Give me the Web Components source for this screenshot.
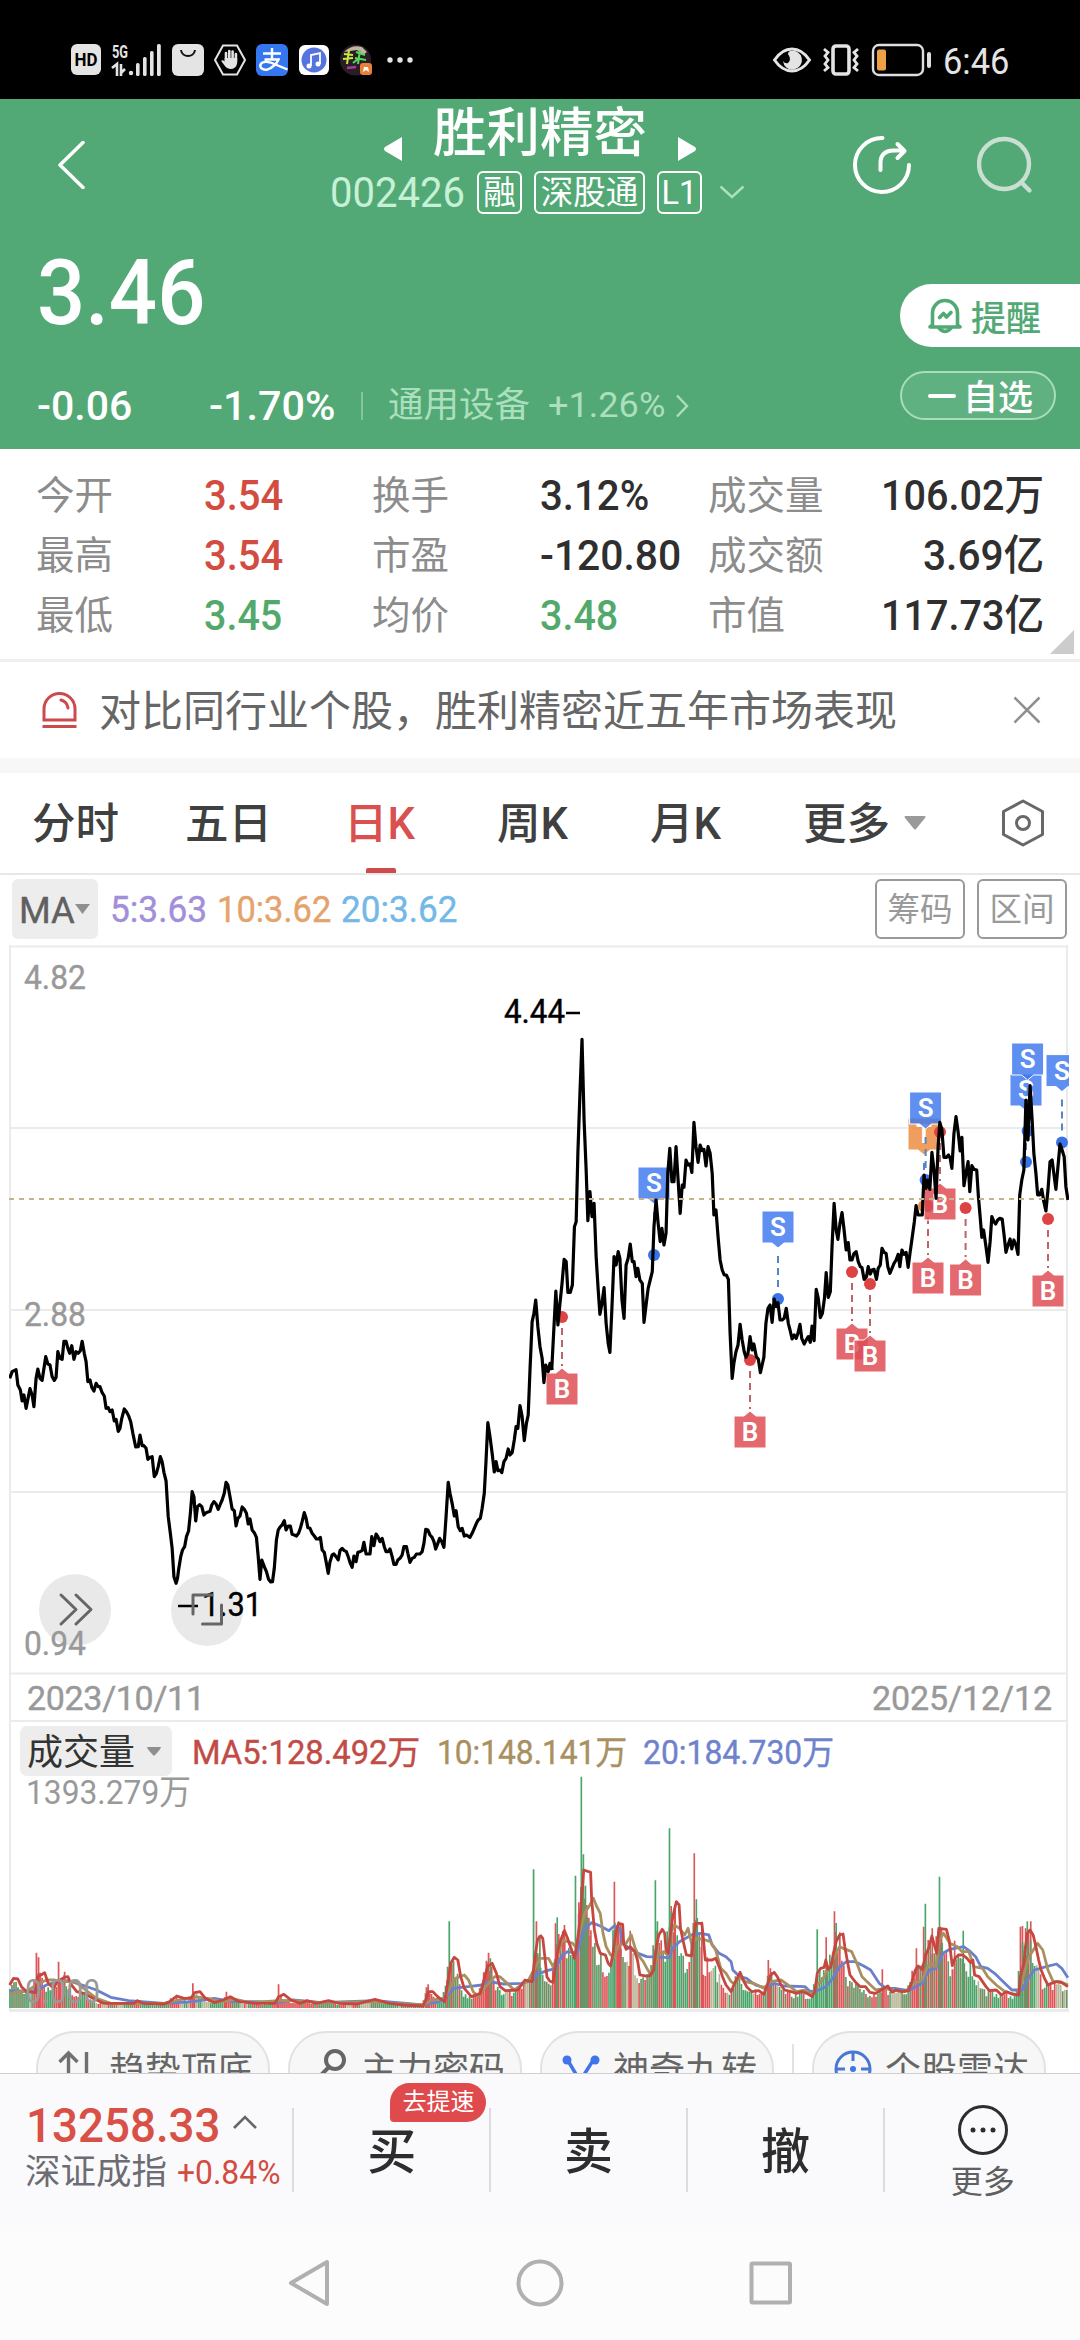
<!DOCTYPE html>
<html lang="zh-CN">
<head>
<meta charset="utf-8">
<title>胜利精密 002426</title>
<style>
body {
  margin: 0;
  width: 1080px;
  height: 2340px;
  overflow: hidden;
  background: #fff;
  color: #2f2f2f;
  font-family: Roboto, "Noto Sans CJK SC", sans-serif;
}
</style>
</head>
<body>
<status-bar></status-bar>
<stock-header></stock-header>
<quote-grid>
  <quote-item label="今开" tone="up" w="79">3.54</quote-item>
  <quote-item label="换手" w="109">3.12%</quote-item>
  <quote-item label="成交量" w="163" end>106.02万</quote-item>
  <quote-item label="最高" tone="up" w="79">3.54</quote-item>
  <quote-item label="市盈" w="141">-120.80</quote-item>
  <quote-item label="成交额" w="121" end>3.69亿</quote-item>
  <quote-item label="最低" tone="down" w="78">3.45</quote-item>
  <quote-item label="均价" tone="down" w="78">3.48</quote-item>
  <quote-item label="市值" w="163" end>117.73亿</quote-item>
</quote-grid>
<notice-bar>对比同行业个股，胜利精密近五年市场表现</notice-bar>
<period-tabs>
  <period-tab style="width: 153px">分时</period-tab>
  <period-tab style="width: 159px">五日</period-tab>
  <period-tab active style="width: 153px">日K</period-tab>
  <period-tab style="width: 153px">周K</period-tab>
  <period-tab style="width: 153px">月K</period-tab>
  <period-tab more style="width: 128px">更多</period-tab>
</period-tabs>
<ma-toolbar></ma-toolbar>
<price-chart></price-chart>
<volume-chart></volume-chart>
<tool-chips></tool-chips>
<trade-bar></trade-bar>
<nav-bar></nav-bar>

<script>
function define(name, html, setup) {
  const template = document.createElement("template");
  template.innerHTML = html;
  customElements.define(
    name,
    class extends HTMLElement {
      constructor() {
        super();
        this.attachShadow({ mode: "open" }).appendChild(
          template.content.cloneNode(true)
        );
        if (setup) setup(this, this.shadowRoot);
      }
    }
  );
}

// text squeezed or stretched to an exact width
class FitText extends HTMLElement {
  constructor() {
    super();
    this.attachShadow({ mode: "open" }).innerHTML = `
      <style>
      :host { display: inline-block; line-height: 1; white-space: nowrap; flex: none; }
      span { display: inline-block; transform-origin: 0 50%; }
      </style><span><slot></slot></span>`;
  }
  connectedCallback() {
    const span = this.shadowRoot.querySelector("span");
    const w = Number(this.getAttribute("w"));
    const real = span.offsetWidth;
    if (!w || !real) return;
    this.style.width = w + "px";
    span.style.transform = `scaleX(${w / real})`;
  }
}
customElements.define("fit-text", FitText);

define("status-bar", `
<style>
:host {
  display: flex;
  align-items: center;
  box-sizing: border-box;
  height: 99px;
  padding: 20px 71px 0;
  background: #000;
  color: #e4e4e4;
}
svg { flex: none; display: block; overflow: visible; }
.space { flex: 1; }
fit-text { font-size: 37px; font-weight: 400; padding-top: 3px; }
</style>
<svg width="30" height="31" viewBox="0 0 30 31"><rect width="30" height="31" rx="6" fill="#e4e4e4"/><text x="3.5" y="22" font-size="18" font-weight="700" textLength="23" lengthAdjust="spacingAndGlyphs" fill="#000">HD</text></svg>
<svg style="margin-left: 11px" width="50" height="32" viewBox="0 0 50 32" fill="#e4e4e4">
  <text x="0" y="14" font-size="18" font-weight="700" textLength="16" lengthAdjust="spacingAndGlyphs">5G</text>
  <path d="M0 24l5-4v12M9 20v12M13 25l-4 4" fill="none" stroke="#e4e4e4" stroke-width="2.6"/>
  <circle cx="19" cy="29" r="2.2"/><rect x="24" y="19" width="3.6" height="13" rx="1.6"/><rect x="31" y="13" width="3.6" height="19" rx="1.6"/><rect x="38" y="7" width="3.6" height="25" rx="1.6"/><rect x="45" y="0" width="3.8" height="32" rx="1.6"/>
</svg>
<svg style="margin-left: 10px" width="32" height="32" viewBox="0 0 32 32"><rect width="32" height="32" rx="6" fill="#e4e4e4"/><path d="M9 6c1 8 13 8 14 0" fill="none" stroke="#111" stroke-width="2"/></svg>
<svg style="margin-left: 10px" width="32" height="32" viewBox="0 0 32 32"><path d="M9 1.500h14l8 14.500-8 14.500H9L1 16z" fill="none" stroke="#e4e4e4" stroke-width="2"/><path d="M12 17V9M15.300 15V7M18.600 15V7.500M21.900 17v-7" stroke="#e4e4e4" stroke-width="2.600" stroke-linecap="round"/><path d="M10.700 14h12.500v5q-1 6-7 6-4-.5-6-4l-3-4q1-1.500 3.500.5z" fill="#e4e4e4"/></svg>
<svg style="margin-left: 10px" width="32" height="32" viewBox="0 0 32 32"><rect width="32" height="32" rx="6" fill="#3577ef"/><path d="M7 9.500h18M16 4v11M8.500 15.500h14c-2 5-6 8-11 10-5 1-8-2-7-5 2-4 9-3 15 0l12 5" fill="none" stroke="#fff" stroke-width="2.400"/></svg>
<svg style="margin-left: 11px" width="30" height="30" viewBox="0 0 30 30"><rect width="30" height="30" rx="6" fill="#fff"/><circle cx="15" cy="15" r="12.500" fill="#5574de"/><path d="M12 21V10l9-2v11" fill="none" stroke="#fff" stroke-width="1.800"/><circle cx="10" cy="21" r="2.500" fill="#fff"/><circle cx="19" cy="19" r="2.500" fill="#fff"/></svg>
<svg style="margin-left: 11px" width="32" height="32" viewBox="0 0 32 32"><circle cx="15.500" cy="16" r="15.500" fill="#2a1d26"/><path d="M4 8q8-8 18-5l5 5-4 3-6-5z" fill="#c4b3a0"/><path d="M4 10l9 1M9 6L7 20M3 15l10-1" stroke="#c8e83a" stroke-width="2"/><path d="M16 8l9 3M20 6l-2 14M15 14l11 2M13 19l5-4" stroke="#54d65a" stroke-width="2"/><path d="M7 24l9-1" stroke="#a23ca0" stroke-width="2.500"/><rect x="20" y="19" width="12" height="12" rx="3" fill="#e9803a"/><path d="M23 28l1-5h4l1 5-3-2z" fill="#fff"/></svg>
<svg style="margin-left: 15px" width="26" height="6" viewBox="0 0 26 6" fill="#e4e4e4"><circle cx="3" cy="3" r="2.700"/><circle cx="13" cy="3" r="2.700"/><circle cx="23" cy="3" r="2.700"/></svg>
<div class="space"></div>
<svg width="38" height="28" viewBox="0 0 38 28"><path d="M1.500 14Q9 3 19 3t17.500 11Q29 25 19 25T1.500 14z" fill="none" stroke="#e4e4e4" stroke-width="3"/><path d="M17 5a9.500 9.500 0 1 1-7 10q2 3 5 2 4-3 0-9 0-2 2-3z" fill="#e4e4e4"/></svg>
<svg style="margin-left: 11px" width="38" height="32" viewBox="0 0 38 32" fill="none" stroke="#e4e4e4"><rect x="11" y="2" width="16" height="28" rx="3" stroke-width="3.600"/><path d="M2 5l4 3.500-3 3.500 3 4-3 4 3 3.500L2 27M36 5l-4 3.500 3 3.500-3 4 3 4-3 3.500L36 27" stroke-width="2.800"/></svg>
<svg style="margin-left: 12px" width="60" height="32" viewBox="0 0 60 32"><rect x="1" y="1" width="50" height="30" rx="6" fill="none" stroke="#dedede" stroke-width="2.400"/><rect x="5" y="5.500" width="9" height="21" rx="2" fill="#eea045"/><rect x="55" y="8" width="4" height="16" rx="2" fill="#dedede"/></svg>
<fit-text style="margin-left: 11px" w="66">6:46</fit-text>
`);

define("stock-header", `
<style>
:host {
  display: block;
  height: 350px;
  background: #53a975;
  color: #fff;
}
svg { display: block; flex: none; }
.top { display: flex; height: 120px; }
.back { margin: 42px 246px 0 57px; }
.center { width: 415px; }
.title { display: flex; height: 66px; align-items: center; padding-left: 53px; font-size: 53px; line-height: 66px; }
.title svg { margin-top: 33px; }
.title fit-text { margin: 0 31px; padding-top: 5px; font-weight: 500; }
.code { display: flex; height: 54px; align-items: center; }
.code fit-text { color: #c6f1d6; font-size: 43px; margin-left: -1px; }
.tag {
  box-sizing: border-box;
  height: 43px;
  margin-left: 12px;
  border: 2px solid #fff;
  border-radius: 6px;
  text-align: center;
  font-size: 32.500px;
  line-height: 40px;
}
.share { margin: 36px 64px 0 107px; }
.search { margin-top: 36px; }
.body { display: flex; justify-content: space-between; }
.price { height: 146px; display: flex; align-items: center; box-sizing: border-box; padding: 3px 0 0 37px; font-size: 91px; font-weight: 500; }
.change { height: 82px; display: flex; align-items: center; padding-left: 37px; font-size: 41px; font-weight: 500; }
.change i { width: 2px; height: 28px; margin: 0 25px 0 26px; background: #86c49e; }
.muted { color: #abdfbd; font-size: 35.500px; font-weight: 400; line-height: 1; }
.side { width: 180px; padding-top: 65px; }
.remind {
  display: flex;
  align-items: center;
  box-sizing: border-box;
  height: 63px;
  padding-left: 28px;
  border-radius: 32px 0 0 32px;
  background: #fff;
  color: #53a975;
  font-size: 35px;
  font-weight: 500;
}
.remind svg { margin-right: 9px; }
.pick {
  display: flex;
  align-items: center;
  box-sizing: border-box;
  width: 156px;
  height: 49px;
  margin-top: 24px;
  padding-left: 26px;
  border: 2px solid #a9dcbb;
  border-radius: 25px;
  background: #60b181;
  font-size: 35px;
  font-weight: 500;
}
.pick i { width: 28px; height: 4px; border-radius: 2px; margin-right: 7px; background: #fff; }
.pick span { margin-top: -2px; }
</style>
<div class="top">
  <svg class="back" width="28" height="48" viewBox="0 0 28 48"><path d="M26 1.500L3 24l23 22.500" fill="none" stroke="#fff" stroke-width="3.500" stroke-linecap="round" stroke-linejoin="round"/></svg>
  <div class="center">
    <div class="title">
      <svg width="18" height="26" viewBox="0 0 18 26"><path d="M18 1v24L1 15q-2-2 0-4z" fill="#fff"/></svg>
      <fit-text w="214">胜利精密</fit-text>
      <svg width="18" height="26" viewBox="0 0 18 26"><path d="M0 1v24l17-10q2-2 0-4z" fill="#fff"/></svg>
    </div>
    <div class="code">
      <fit-text w="135">002426</fit-text>
      <span class="tag" style="width: 45px">融</span>
      <span class="tag" style="width: 111px">深股通</span>
      <span class="tag" style="width: 45px">L1</span>
      <svg style="margin-left: 17px" width="26" height="14" viewBox="0 0 26 14"><path d="M1.500 1.500L13 12 24.500 1.500" fill="none" stroke="#abdfbd" stroke-width="2.500"/></svg>
    </div>
  </div>
  <svg class="share" width="60" height="60" viewBox="0 0 60 60" fill="none" stroke="#fff" stroke-width="4" stroke-linecap="round" stroke-linejoin="round"><path d="M29.500 3a27 27 0 1 0 26.500 27"/><path d="M27.500 35v-7q0-12 13-12.500h9.500M44.500 9l7 7-7 7"/></svg>
  <svg class="search" width="60" height="60" viewBox="0 0 60 60" fill="none" stroke="#c9dfd1" stroke-width="4.400" stroke-linecap="round"><circle cx="27" cy="29" r="25"/><path d="M45 48l7.500 7.500"/></svg>
</div>
<div class="body">
  <div>
    <div class="price"><fit-text w="168">3.46</fit-text></div>
    <div class="change">
      <fit-text w="95">-0.06</fit-text>
      <fit-text style="margin-left: 77px" w="126">-1.70%</fit-text>
      <i></i>
      <span class="muted">通用设备</span>
      <fit-text style="margin-left: 18px" class="muted" w="117">+1.26%</fit-text>
      <svg style="margin-left: 10px" width="14" height="24" viewBox="0 0 14 24"><path d="M2 1.500L12 12 2 22.500" fill="none" stroke="#abdfbd" stroke-width="2.400"/></svg>
    </div>
  </div>
  <div class="side">
    <div class="remind">
      <svg width="34" height="36" viewBox="0 0 34 36" fill="none" stroke="#53a975" stroke-width="3.600" stroke-linejoin="round" stroke-linecap="round"><path d="M4.500 27V15a12.500 12.500 0 0 1 25 0v12l2.500 2H2z"/><path d="M11 30q6 7 12 0" /><path d="M11.500 19.500l4-4 3 3.500 4.500-4.500"/></svg>
      <span>提醒</span>
    </div>
    <div class="pick"><i></i><span>自选</span></div>
  </div>
</div>
`);

define("quote-item", `
<style>
:host { display: flex; align-items: center; height: 60px; font-size: 42px; }
:host([tone="up"]) { color: #d34c42; }
:host([tone="down"]) { color: #53a96c; }
.label { width: 168px; color: #8c8c8c; font-size: 38.500px; line-height: 1; }
:host([end]) { justify-content: space-between; }
:host([end]) .label { width: auto; }
fit-text { font-weight: 500; }
</style>
<span class="label"></span>
`, (el, root) => {
  root.querySelector(".label").textContent = el.getAttribute("label");
  const value = document.createElement("fit-text");
  value.setAttribute("w", el.getAttribute("w"));
  value.textContent = el.textContent;
  root.appendChild(value);
});

define("quote-grid", `
<style>
:host {
  display: grid;
  grid-template-columns: 336px 336px 1fr;
  align-content: start;
  box-sizing: border-box;
  height: 213px;
  padding: 17px 36px 0;
  border-bottom: 3px solid #efefef;
  position: relative;
}
svg { position: absolute; right: 6px; bottom: 5px; }
</style>
<slot></slot>
<svg width="24" height="24" viewBox="0 0 24 24"><path d="M24 0v24H0z" fill="#ccc"/></svg>
`);

define("notice-bar", `
<style>
:host {
  display: flex;
  align-items: center;
  box-sizing: border-box;
  height: 111px;
  padding: 0 39px 0 41px;
  border-bottom: 15px solid #f7f7f7;
  color: #666;
  font-size: 42px;
  line-height: 1;
}
.text { flex: 1; margin-left: 21px; padding-top: 4px; }
</style>
<svg width="37" height="38" viewBox="0 0 37 38" fill="none" stroke="#cb4b4c" stroke-width="3"><path d="M3 29V18a15.500 15.500 0 0 1 31 0v11zM1.500 35.500h34"/><path d="M20 9q6 1.500 7 8" stroke-linecap="round"/></svg>
<span class="text"><slot></slot></span>
<svg width="28" height="28" viewBox="0 0 28 28"><path d="M1.500 1.500l25 25M26.500 1.500l-25 25" stroke="#8f8f8f" stroke-width="2.500"/></svg>
`);

define("period-tab", `
<style>
:host {
  display: flex;
  flex-direction: column;
  height: 100px;
  color: #404040;
  font-size: 43.500px;
  font-weight: 500;
}
.row { display: flex; box-sizing: border-box; height: 95px; align-items: center; padding-top: 9px; line-height: 1; }
:host([active]) { color: #d9504f; }
i { display: none; width: 30px; height: 5px; margin-left: 22px; background: #cf4b4b; border-radius: 2px 2px 0 0; }
:host([active]) i { display: block; }
svg { display: none; margin: -4px 0 0 14px; }
:host([more]) svg { display: block; }
</style>
<div class="row"><slot></slot><svg width="22" height="14" viewBox="0 0 22 14"><path d="M1 0h20q1 1 0 2l-9 11q-1 1-2 0L1 2q-1-1 0-2z" fill="#9a9a9a"/></svg></div>
<i></i>
`);

define("period-tabs", `
<style>
:host {
  display: flex;
  box-sizing: border-box;
  height: 102px;
  padding-left: 32px;
  border-bottom: 2px solid #e8e8e8;
}
svg { flex: none; margin: 26px 0 0 70px; }
</style>
<slot></slot>
<svg width="44" height="48" viewBox="0 0 44 48" fill="none" stroke="#686868" stroke-width="3" stroke-linejoin="round"><path d="M22 2l19.500 10.500v23L22 46 2.500 35.500v-23z"/><circle cx="22" cy="24" r="6.500"/></svg>
`);

define("ma-toolbar", `
<style>
:host {
  display: flex;
  align-items: center;
  box-sizing: border-box;
  height: 70px;
  padding: 0 13px 2px 12px;
  font-size: 36px;
}
.ma {
  display: flex;
  align-items: center;
  box-sizing: border-box;
  width: 86px;
  height: 60px;
  padding-left: 7px;
  border-radius: 6px;
  background: #ededed;
  color: #606060;
  font-size: 37px;
}
fit-text { margin-left: 12px; padding-top: 2px; -webkit-text-stroke: .4px; }
.ma fit-text { margin-left: 0; }
.space { flex: 1; }
.btn {
  box-sizing: border-box;
  width: 90px;
  height: 60px;
  margin-left: 12px;
  border: 2px solid #999;
  border-radius: 6px;
  color: #999;
  font-size: 32.500px;
  line-height: 58px;
  text-align: center;
}
</style>
<div class="ma"><fit-text w="56">MA</fit-text><svg width="15" height="10" viewBox="0 0 15 10"><path d="M0 0h15L7.500 10z" fill="#8f8f8f"/></svg></div>
<fit-text w="97" style="color: #a18fd9">5:3.63</fit-text>
<fit-text w="114" style="color: #e4a36d; margin-left: 10px">10:3.62</fit-text>
<fit-text w="116" style="color: #74b8e8; margin-left: 10px">20:3.62</fit-text>
<div class="space"></div>
<span class="btn">筹码</span>
<span class="btn">区间</span>
`);

const PRICE_LEFT = "27,235 34,215 45,209 50,255 57,270 62,303 67,285 73,325 84,266 90,285 95,320 101,235 106,207 112,235 118,241 128,170 134,192 140,195 146,230 152,241 157,232 162,155 168,175 174,178 179,124 185,124 190,145 195,160 201,137 207,178 213,155 219,160 225,152 230,124 236,160 241,185 246,245 252,240 257,262 263,273 269,250 275,260 280,260 286,278 292,288 297,325 303,323 308,335 314,330 320,363 325,358 331,394 336,385 341,355 348,327 354,335 360,347 366,365 372,400 380,441 387,440 392,405 398,437 403,437 409,445 414,478 420,472 426,470 432,530 438,520 443,500 449,470 454,485 459,517 465,543 471,650 477,700 482,745 487,830 493,850 497,835 500,810 506,770 511,750 517,740 522,710 528,693 533,640 538,575 543,590 548,663 553,620 559,614 565,620 571,645 577,638 588,634 593,615 599,605 605,612 611,628 616,615 622,600 628,580 633,547 638,555 644,590 650,627 656,632 661,678 666,655 672,648 678,621 684,628 690,640 695,672 700,657 706,690 712,698 718,712 723,770 728,838 733,780 740,800 746,815 752,838 758,846 763,845 768,805 774,720 779,690 785,680 790,675 796,662 801,690 807,678 813,678 818,703 824,705 830,708 836,700 841,685 846,665 852,638 857,655 862,683 868,685 874,700 880,708 886,717 892,717 897,712 902,750 908,757 914,790 919,820 924,785 930,765 935,762 941,770 947,780 952,752 958,745 964,752 970,755 975,770 980,788 986,802 991,768 997,785 1002,757 1008,755 1014,752 1019,727 1025,762 1036,762 1041,710 1047,737 1053,702 1058,710 1064,725 1070,715 1076,740 1081,755 1087,755 1092,747 1098,770 1103,793 1109,793 1114,780 1120,775 1126,765 1131,740 1138,740 1142,760 1148,787 1154,775 1160,772 1166,762 1176,762 1182,755 1187,730 1192,688 1198,690 1204,705 1210,712 1215,725 1220,747 1226,730 1231,715 1237,725 1243,742 1249,650 1255,547 1260,580 1266,610 1272,648 1277,632 1283,680 1289,692 1294,685 1300,708 1306,705 1316,712 1322,700 1328,685 1334,670 1339,660 1345,655 1350,625 1356,580 1361,480 1366,368 1372,410 1378,460 1384,516 1389,485 1394,512 1400,510 1405,518 1411,485 1417,475 1423,447 1428,465 1434,458 1440,420 1445,380 1450,385 1456,317 1462,350 1468,422 1474,370 1479,345 1484,210 1490,65 1495,40 1500,0 1506,80 1512,140 1518,175 1523,248 1528,195 1535,215 1540,190 1546,210";
const PRICE_RIGHT = "34,1290 46,1053 52,1155 58,1090 64,1030 70,958 76,965 81,1057 88,1057 94,1035 100,860 105,845 110,640 116,460 122,298 128,540 134,690 139,842 145,755 151,830 157,790 163,950 169,1050 174,1123 180,1090 186,1043 192,1150 198,1210 203,1237 209,1100 215,950 221,975 227,935 232,955 238,1080 244,1135 250,975 256,955 262,912 268,965 273,965 279,1010 284,985 290,1020 297,1030 302,1147 308,1095 314,1045 320,1020 326,995 331,860 337,780 343,850 349,905 354,865 360,915 366,880 371,700 377,625 383,725 389,725 395,620 401,720 407,820 413,735 418,742 424,660 430,675 436,672 441,697 447,547 453,620 459,667 465,615 471,632 476,628 482,678 488,620 494,640 500,700 505,825 511,810 517,890 523,960 529,990 535,1005 541,1005 547,1018 552,1180 558,1315 563,1270 569,1235 575,1215 581,1153 587,1200 593,1235 598,1252 604,1240 610,1190 616,1230 621,1212 628,1250 634,1258 640,1298 645,1275 650,1252 656,1150 662,1105 668,1095 674,1147 680,1077 686,1100 691,1088 697,1140 703,1140 709,1135 715,1105 721,1150 726,1170 732,1197 738,1185 744,1195 749,1180 755,1153 760,1195 767,1212 773,1200 779,1190 785,1207 790,1158 796,1202 802,1048 808,1075 814,1133 820,1120 826,1075 831,998 837,1072 843,1055 848,920 854,790 860,870 865,898 871,850 877,818 883,870 889,930 895,908 900,960 906,960 911,942 918,935 924,965 930,980 935,983 941,1018 948,1010 953,980 959,1002 964,990 970,988 977,1018 982,985 988,975 993,925 999,937 1005,940 1010,980 1016,1000 1022,985 1028,970 1034,960 1040,943 1045,980 1051,930 1057,943 1063,937 1069,982 1075,935 1081,890 1087,845 1092,797 1098,825 1110,825 1115,705 1121,745 1126,720 1132,748 1138,637 1144,690 1150,775 1156,620 1161,547 1167,570 1173,652 1180,652 1186,645 1191,655 1196,685 1202,580 1208,530 1214,575 1220,633 1225,592 1231,737 1237,700 1243,665 1248,755 1254,677 1260,688 1268,690 1273,770 1278,830 1283,892 1288,870 1295,920 1301,967 1307,905 1312,830 1318,845 1323,852 1329,840 1335,835 1342,837 1347,880 1353,937 1359,915 1365,897 1370,927 1376,900 1382,915 1388,943 1393,765 1399,720 1405,690 1411,480 1417,600 1423,437 1429,540 1434,640 1440,700 1445,765 1451,765 1457,748 1463,785 1469,813 1475,750 1481,665 1487,660 1492,700 1498,748 1504,680 1510,612 1516,630 1522,650 1527,740 1533,780";

// kind, x, y of the traded price
const TRADES = [
  ["B", 562, 1317], ["S", 654, 1255], ["B", 750, 1360], ["S", 778, 1299],
  ["B", 852, 1272], ["B", 870, 1284], ["T", 924, 1206], ["S", 925.6, 1180],
  ["B", 928, 1206], ["B", 940, 1132], ["B", 965.6, 1208], ["S", 1026, 1162],
  ["S", 1027.6, 1131], ["B", 1048, 1219], ["S", 1062, 1142.6],
];
const TRADE_FILL = { B: "#de4a52", S: "#3f78ee", T: "#ec8a3c" };
const TRADE_DOT = { B: "#dd4343", S: "#3a73e8", T: "#ec8a3c" };

function tradeMarker([kind, x, y]) {
  const buy = kind === "B";
  const top = buy ? y + 56 : y - 88;
  const box = buy
    ? `M${x - 16} ${top}h10l6-5 6 5h10v32h-32z`
    : `M${x - 16} ${top}h32v32h-10l-6 5-6-5h-10z`;
  const from = buy ? y + 11 : y - 43;
  const to = buy ? y + 49 : y - 7;
  return `
    <line x1="${x}" x2="${x}" y1="${from}" y2="${to}" stroke="${buy ? "#bd6468" : "#5585c4"}" stroke-width="2" stroke-dasharray="7 5"/>
    <circle cx="${x}" cy="${y}" r="6" fill="${TRADE_DOT[kind]}"/>
    <path d="${box}" fill="${TRADE_FILL[kind]}" fill-opacity=".83" stroke="#fff" stroke-width="1"/>
    <text x="${x}" y="${top + 25}" text-anchor="middle" font-size="26" font-weight="600" fill="#fff">${kind}</text>`;
}

define("price-chart", `
<style>
:host { display: block; height: 777px; }
svg { display: block; }
.grid { stroke: #ebebeb; stroke-width: 2; }
.axis { fill: #999; font-size: 34px; stroke: #999; stroke-width: .4px; }
.line { fill: none; stroke: #000; stroke-width: 3.200; stroke-linejoin: round; vector-effect: non-scaling-stroke; }
</style>
<svg width="1080" height="777" viewBox="0 945 1080 777">
  <clipPath id="plot"><rect x="9" y="945" width="1060" height="777"/></clipPath>
  <path class="grid" d="M9 946.500h1059M10 1128h1057M10 1310h1057M10 1492h1057M10 1673.500h1057M10 1721h1057M10 945v777M1067 945v777"/>
  <g class="axis">
    <text x="24" y="989" textLength="62" lengthAdjust="spacingAndGlyphs">4.82</text>
    <text x="24" y="1325.500" textLength="62" lengthAdjust="spacingAndGlyphs">2.88</text>
    <text x="27" y="1710" textLength="178" lengthAdjust="spacing">2023/10/11</text>
    <text x="872" y="1710" textLength="180" lengthAdjust="spacing">2025/12/12</text>
  </g>
  <circle cx="75" cy="1610" r="36" fill="#e9e9e9"/>
  <circle cx="207" cy="1610" r="36" fill="#e9e9e9"/>
  <g class="axis"><text x="24" y="1655" textLength="62" lengthAdjust="spacingAndGlyphs">0.94</text></g>
  <g font-size="33" stroke="#000" stroke-width=".4">
    <text x="504" y="1023" fill="#000" textLength="61" lengthAdjust="spacingAndGlyphs">4.44</text>
    <text x="202" y="1616" fill="#000" textLength="60" lengthAdjust="spacingAndGlyphs">1.31</text>
  </g>
  <path d="M566 1013h14M178 1606h20" stroke="#000" stroke-width="2.600"/>
  <path d="M61 1595l15 14.500L61 1624M76 1595l15 14.500L76 1624M193 1614v-19h19M221.500 1605v19h-19" fill="none" stroke="#666" stroke-width="3" stroke-linecap="round" stroke-linejoin="round"/>
  <g clip-path="url(#plot)">
    <g id="trades"></g>
    <g transform="translate(0 1300) scale(.35714 .33333)"><polyline class="line" points="${PRICE_LEFT}"/></g>
    <g transform="translate(540 940) scale(.34439 .33333)"><polyline class="line" points="${PRICE_RIGHT}"/></g>
    <path d="M9 1199h1059" stroke="#c6b38c" stroke-width="2" stroke-dasharray="5 5"/>
  </g>
</svg>
`, (el, root) => {
  root.getElementById("trades").innerHTML = TRADES.map(tradeMarker).join("");
});

// the two halves of the volume plot: moving averages and outstanding days
const VOLUME = [
  {
    step: 5.62,
    from: 28,
    to: 1512,
    ma5: "27,915 38,895 50,897 60,920 75,935 100,938 105,890 115,885 125,878 135,910 150,925 160,905 180,892 190,890 200,915 215,935 235,940 260,955 290,970 340,970 375,970 385,962 400,970 460,972 475,965 495,948 515,955 535,955 545,938 560,935 575,955 600,968 625,960 645,950 670,965 720,970 770,970 780,950 795,943 815,960 840,970 860,962 885,970 920,962 950,970 1000,972 1025,965 1050,958 1090,970 1130,975 1185,978 1192,960 1200,935 1212,935 1225,950 1245,965 1255,900 1262,850 1272,832 1282,840 1290,890 1300,925 1320,950 1345,940 1355,900 1365,860 1378,850 1390,880 1400,920 1415,932 1450,930 1470,900 1490,905 1498,830 1505,780 1512,768",
    ma10: "27,945 45,935 75,935 100,915 130,900 150,900 180,905 210,905 240,930 270,955 310,970 460,970 500,960 545,950 580,955 620,965 660,958 700,968 780,962 830,962 900,968 1050,965 1100,970 1185,975 1210,960 1245,955 1258,925 1275,895 1300,885 1312,900 1325,935 1340,950 1360,920 1385,890 1400,890 1420,910 1440,930 1480,900 1500,860 1512,838",
    ma20: "27,933 100,933 130,915 160,905 190,902 230,915 270,930 310,952 360,962 460,970 540,965 600,955 650,965 720,965 770,968 820,960 900,968 1050,962 1185,975 1230,965 1250,950 1270,925 1310,920 1350,915 1370,905 1410,912 1460,910 1495,900 1503,880 1512,878",
    days: "102,818,r 108,832,r 164,845,r 181,875,r 540,910,r 634,935,r 780,913,r 1194,922,r 1199,913,r 1252,900,r 1258,724,g 1264,850,r 1362,842,r 1368,818,r 1373,835,g 1494,568,g 1502,724,r 1506,820,g",
  },
  {
    step: 5.83,
    from: 2,
    to: 1534,
    ma5: "0,765 8,775 14,830 20,890 28,903 38,907 42,880 50,820 60,780 71,752 80,775 90,805 100,835 108,790 116,720 122,640 127,570 147,577 150,660 158,750 165,790 175,820 190,825 198,850 205,858 212,820 220,760 228,730 240,733 243,790 250,808 262,800 275,815 283,840 290,885 305,888 320,887 330,870 338,800 345,765 355,748 362,760 366,810 372,820 378,770 384,720 390,690 396,665 404,675 408,745 415,780 425,825 440,828 447,760 453,730 470,730 473,760 480,840 500,840 510,835 520,860 530,890 540,915 555,935 565,910 575,890 581,877 590,900 600,920 615,935 635,932 650,943 660,915 670,885 680,877 690,892 700,915 710,930 730,935 745,940 760,935 775,940 790,950 798,935 805,880 815,865 825,862 830,840 836,868 845,860 852,820 860,785 870,765 880,762 885,800 892,840 900,885 915,905 930,920 945,920 958,937 975,940 990,930 1010,918 1022,937 1035,930 1050,935 1070,932 1080,905 1090,870 1098,858 1110,868 1120,825 1130,800 1138,768 1145,795 1152,820 1158,745 1180,748 1188,780 1197,857 1205,835 1215,825 1228,825 1240,835 1250,848 1257,840 1262,885 1275,890 1285,905 1295,920 1305,932 1325,930 1340,945 1355,935 1370,942 1390,945 1395,890 1405,850 1410,800 1415,760 1423,750 1432,765 1440,800 1448,840 1455,870 1465,895 1475,915 1485,910 1500,905 1515,908 1533,920",
    ma10: "0,835 25,835 38,860 50,830 65,780 95,790 103,800 112,770 122,730 132,695 145,675 155,655 165,680 175,700 183,760 192,800 205,825 215,830 230,795 250,790 265,765 275,800 285,825 300,845 312,868 322,885 335,850 345,820 360,815 370,825 380,760 390,735 405,745 420,765 430,745 440,790 455,775 480,780 495,785 510,810 525,865 540,880 555,905 565,912 580,890 595,905 620,910 650,925 670,905 700,900 720,915 745,935 770,930 790,945 805,915 820,900 835,870 845,850 870,800 880,805 905,815 920,850 935,890 950,905 975,930 1000,925 1020,930 1060,935 1085,910 1110,900 1125,860 1135,850 1150,860 1160,780 1172,760 1190,790 1212,800 1225,815 1245,815 1260,860 1285,865 1300,890 1325,915 1350,935 1385,945 1400,900 1420,830 1445,790 1460,810 1475,870 1490,905 1510,905 1533,915",
    ma20: "0,880 20,872 35,868 50,855 65,825 80,815 108,820 118,780 130,745 150,728 175,738 200,752 215,738 232,745 240,790 260,805 285,820 310,830 375,833 385,805 405,785 440,765 465,760 490,765 500,795 520,820 540,830 555,845 560,870 580,890 600,895 625,915 650,922 680,910 710,918 770,920 785,935 810,930 830,920 850,895 870,860 890,845 915,845 940,858 960,870 985,910 1005,925 1030,925 1070,932 1100,915 1110,910 1130,870 1150,865 1170,820 1190,808 1230,800 1250,815 1265,830 1280,860 1300,865 1320,880 1345,905 1370,930 1400,930 1415,900 1435,870 1470,860 1500,852 1515,865 1533,893",
    days: "45,730,r 50,712,g 71,735,r 103,587,g 112,703,r 120,290,g 126,523,g 132,617,g 138,712,g 147,768,r 216,605,r 228,724,r 234,730,r 262,752,r 335,601,g 341,724,g 376,445,g 382,698,g 391,690,r 448,520,r 454,658,g 470,725,r 663,840,r 669,865,r 805,748,g 831,772,r 855,694,r 860,729,g 994,868,r 1093,805,r 1114,740,r 1119,671,g 1139,745,r 1160,590,g 1166,745,r 1204,782,r 1229,752,g 1395,740,r 1401,738,r 1410,745,r 1415,724,g 1425,724,r",
  },
];

function levelAt(line, x) {
  for (let i = 1; i < line.length; i++) {
    const [x0, y0] = line[i - 1];
    const [x1, y1] = line[i];
    if (x <= x1) return y0 + ((y1 - y0) * Math.max(0, x - x0)) / (x1 - x0);
  }
  return line[line.length - 1][1];
}

function volumeBars({ step, from, to, ma5, days }) {
  const fast = ma5.split(" ").map((p) => p.split(",").map(Number));
  const base = 984;
  const out = { r: "", g: "", m: "", t: "" };
  let seed = 7;
  let tone = "g";
  const rand = () => (seed = (seed * 16807) % 2147483647) / 2147483647;
  for (let x = from; x < to; x += step) {
    // the average lags its days a little
    const level = base - levelAt(fast, x + step * 1.5);
    const h = Math.max(7, level * (0.66 + rand() * 0.42));
    const rising = levelAt(fast, x + 8) < levelAt(fast, x - 4) - 4;
    if (rand() < 0.6) {
      const pick = rand();
      if (rising) tone = pick < 0.7 ? "r" : "m";
      else tone = pick < 0.22 ? "r" : pick < 0.6 ? "g" : pick < 0.82 ? "m" : "t";
    }
    out[tone] += `M${x.toFixed(1)} ${base}v${-h.toFixed(0)}`;
  }
  for (const day of days.split(" ")) {
    const [x, y, c] = day.split(",");
    out[c] += `M${x} ${base}V${y}`;
  }
  return `<path class="bar" stroke="#b9b597" d="${out.t}"/><path class="bar" stroke="#6f9163" d="${out.m}"/><path class="bar" stroke="#dd5557" d="${out.r}"/><path class="bar" stroke="#4ba56b" d="${out.g}"/>`;
}

define("volume-chart", `
<style>
:host { display: block; height: 290px; }
svg { display: block; overflow: visible; }
.legend {
  display: flex;
  align-items: center;
  box-sizing: border-box;
  height: 54px;
  margin: 0 12px 0 9px;
  padding-left: 9px;
  border: solid #ebebeb;
  border-width: 0 2px;
  font-size: 33px;
}
.legend fit-text { padding-top: 6px; -webkit-text-stroke: .4px; }
.kind {
  display: flex;
  align-items: center;
  box-sizing: border-box;
  width: 152px;
  height: 50px;
  margin-top: 4px;
  padding-left: 7px;
  border-radius: 7px;
  background: #ededed;
  color: #333;
  font-size: 36px;
  line-height: 1;
}
.kind span { padding-top: 3px; }
.kind svg { margin-left: 12px; }
.bar { fill: none; stroke-width: 4.800; }
.ma { fill: none; stroke-width: 2.800; stroke-linejoin: round; vector-effect: non-scaling-stroke; }
</style>
<div class="legend">
  <div class="kind"><span>成交量</span><svg width="14" height="9" viewBox="0 0 14 9"><path d="M0 0h14q0 2-7 9Q0 2 0 0z" fill="#8f8f8f"/></svg></div>
  <fit-text w="228" style="margin-left: 20px; color: #c14b45">MA5:128.492万</fit-text>
  <fit-text w="190" style="margin-left: 17px; color: #a9905f">10:148.141万</fit-text>
  <fit-text w="191" style="margin-left: 16px; color: #6e83cb">20:184.730万</fit-text>
</div>
<svg id="plot" width="1080" height="236" viewBox="0 1776 1080 236">
  <path d="M10 1776v236M1067 1776v236" stroke="#ebebeb" stroke-width="2"/>
  <path d="M9 2010.500h1060" stroke="#ebebeb" stroke-width="3"/>
  <g id="left" transform="translate(0 1680) scale(.35714 .33333)"></g>
  <g id="right" transform="translate(540 1680) scale(.34439 .33333)"></g>
  <g fill="#999" font-size="34">
    <text x="26" y="1804" textLength="165" lengthAdjust="spacingAndGlyphs">1393.279万</text>
    <text x="25" y="2003" textLength="75" lengthAdjust="spacingAndGlyphs">0.000</text>
  </g>
</svg>
`, (el, root) => {
  ["left", "right"].forEach((id, i) => {
    const part = VOLUME[i];
    root.getElementById(id).innerHTML = `${volumeBars(part)}
      <polyline class="ma" stroke="#6b80cc" points="${part.ma20}"/>
      <polyline class="ma" stroke="#a8905f" points="${part.ma10}"/>
      <polyline class="ma" stroke="#c6473f" points="${part.ma5}"/>`;
  });
});

define("tool-chip", `
<style>
:host {
  display: flex;
  align-items: center;
  box-sizing: border-box;
  flex: none;
  width: 234px;
  height: 76px;
  padding-left: 20px;
  border: 2px solid #e2e2e2;
  border-radius: 38px;
  background: #f7f7f7;
  color: #666;
  font-size: 36px;
  line-height: 1;
}
span { margin-left: 13px; padding-top: 3px; white-space: nowrap; }
</style>
<slot name="icon"></slot><span><slot></slot></span>
`);

define("tool-chips", `
<style>
:host {
  display: flex;
  box-sizing: border-box;
  height: 61px;
  padding: 19px 0 0 36px;
  gap: 18px;
  overflow: hidden;
}
i { width: 2px; height: 50px; margin-top: 13px; background: #e2e2e2; }
svg { fill: none; }
</style>
<tool-chip><svg slot="icon" width="38" height="40" viewBox="0 0 38 40" stroke="#707070" stroke-width="3.400"><path d="M10.500 38V4M1.500 13l9-9 9 9M28.500 3v34l9-9M28.500 36l-9-11"/></svg>趋势顶底</tool-chip>
<tool-chip><svg slot="icon" width="38" height="40" viewBox="0 0 38 40" stroke="#666" stroke-width="4"><circle cx="25" cy="11" r="9"/><path d="M19 18L6 31l5 5"/></svg>主力密码</tool-chip>
<tool-chip><svg slot="icon" width="38" height="40" viewBox="0 0 38 40"><path d="M5 10l13 22L32 10" stroke="#3f74ea" stroke-width="3.500"/><circle cx="5" cy="11" r="4.500" fill="#3f74ea"/><circle cx="33" cy="11" r="4.500" fill="#3f74ea"/></svg>神奇九转</tool-chip>
<i></i>
<tool-chip><svg slot="icon" width="38" height="40" viewBox="0 0 38 40" stroke="#4a76d8" stroke-width="3"><circle cx="19" cy="20" r="17"/><path d="M19 3v9M2 20h9M27 20h9M19 28v9"/><circle cx="19" cy="20" r="3" fill="#3f74ea" stroke="none"/></svg>个股雷达</tool-chip>
`);

define("trade-bar", `
<style>
:host {
  display: flex;
  align-items: flex-start;
  box-sizing: border-box;
  height: 158px;
  padding-top: 34px;
  border-top: 1px solid #cfcfd1;
  background: #fafafc;
}
.index { width: 293px; height: 84px; }
.row { display: flex; align-items: center; }
.value { height: 34px; padding-left: 26px; color: #d85046; font-size: 49px; font-weight: 500; }
.name { height: 40px; margin-top: 10px; padding-left: 25px; color: #6c6c72; font-size: 35.500px; line-height: 1; }
.name span { padding-top: 2px; }
.cell {
  position: relative;
  box-sizing: border-box;
  width: 197px;
  height: 84px;
  border-left: 2px solid #dcdce0;
  color: #2d2d2d;
  font-size: 49px;
  font-weight: 500;
  line-height: 89px;
  text-align: center;
}
.badge {
  position: absolute;
  left: 96px;
  top: -25px;
  width: 96px;
  height: 39px;
  border-radius: 20px 20px 20px 4px;
  background: #df4a4c;
  color: #fff;
  font-size: 24px;
  font-weight: 400;
  line-height: 39px;
}
.more { font-size: 32px; font-weight: 400; line-height: 1; color: #606060; }
.more svg { display: block; margin: -4px auto 10px; }
</style>
<div class="index">
  <div class="row value"><fit-text w="195">13258.33</fit-text><svg style="margin-left: 12px; margin-bottom: 6px" width="24" height="14" viewBox="0 0 24 14"><path d="M1 13L12 2l11 11" fill="none" stroke="#666" stroke-width="2.600"/></svg></div>
  <div class="row name"><span>深证成指</span><fit-text w="103" style="margin-left: 10px; color: #d34c42; font-size: 34px">+0.84%</fit-text></div>
</div>
<div class="cell">买<span class="badge">去提速</span></div>
<div class="cell">卖</div>
<div class="cell" style="width: 198px">撤</div>
<div class="cell more"><svg width="52" height="52" viewBox="0 0 52 52"><circle cx="26" cy="26" r="23.500" fill="none" stroke="#2d2d2d" stroke-width="3"/><g fill="#2d2d2d"><circle cx="16" cy="26" r="2.500"/><circle cx="26" cy="26" r="2.500"/><circle cx="36" cy="26" r="2.500"/></g></svg>更多</div>
`);

define("nav-bar", `
<style>
:host {
  display: flex;
  height: 110px;
  box-sizing: border-box;
  padding: 28px 0 0 288px;
  background: #fcfcfc;
}
svg { flex: none; }
</style>
<svg width="42" height="48" viewBox="0 0 42 48"><path d="M39 3v42L3 24z" fill="none" stroke="#b0b0b0" stroke-width="4" stroke-linejoin="round"/></svg>
<svg style="margin-left: 186px" width="48" height="48" viewBox="0 0 48 48"><circle cx="24" cy="24" r="21.500" fill="none" stroke="#b0b0b0" stroke-width="4"/></svg>
<svg style="margin-left: 185px" width="44" height="48" viewBox="0 0 44 48"><rect x="2.500" y="4.500" width="38.500" height="39" rx="1" fill="none" stroke="#b0b0b0" stroke-width="4"/></svg>
`);
</script>
</body>
</html>
